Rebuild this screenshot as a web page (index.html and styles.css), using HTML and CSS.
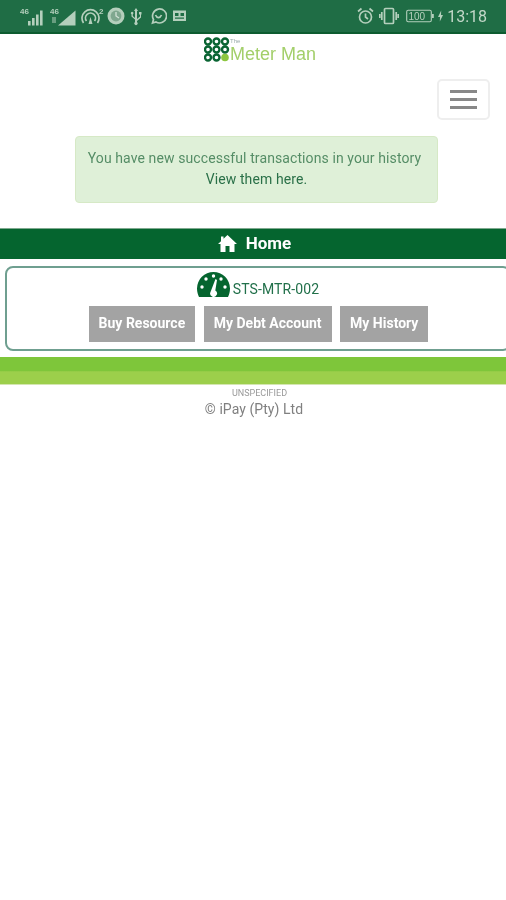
FILE: index.html
```html
<!DOCTYPE html>
<html lang="en">
<head>
<meta charset="utf-8">
<title>The Meter Man</title>
<link rel="stylesheet" href="styles.css">
</head>
<body>
<div class="page">
  <div class="status">
    <div class="status-left">
      <svg class="ic" width="26" height="20" viewBox="0 0 26 20"><text x="0" y="8" class="tiny">46</text><rect x="8" y="15" width="2.6" height="4.500"/><rect x="12" y="12" width="2.6" height="7.500"/><rect x="16" y="8.500" width="2.6" height="11"/><rect x="20" y="4.500" width="2.6" height="15"/></svg>
      <svg class="ic ml-4" width="26" height="20" viewBox="0 0 26 20"><text x="0" y="8" class="tiny">46</text><path d="M8 19.500 L25.500 4.500 V19.500 Z"/><rect x="2" y="11" width="4" height="6" opacity=".5"/></svg>
      <svg class="ic ml-5" width="24" height="20" viewBox="0 0 24 20"><g class="line" stroke-width="1.700"><path d="M2.500 17 A8.500 8.500 0 1 1 16.500 17"/><path d="M5.500 15 A5 5 0 1 1 13.500 15"/></g><path d="M7.500 18 L9.500 11 L11.500 18 Z"/><text x="18" y="8" class="tiny">2</text></svg>
      <svg class="ic ml-2" width="18" height="20" viewBox="0 0 18 20"><circle cx="9" cy="10" r="8.500"/><circle cx="9" cy="10" r="5.400" fill="#7fa78f"/><path d="M9 6 V10 L12 12" fill="none" stroke="#d3e2d7" stroke-width="1.300"/></svg>
      <svg class="ic ml-5" width="12" height="20" viewBox="0 0 12 20"><path d="M6 2 L8 5 H7 V13 L10 10.500 V8.500 H9 V6 H11.500 V8.500 H11 V11.500 L7 15 V16 A1.700 1.700 0 1 1 5 16 V13.500 L1.500 10.500 V8.300 A1.300 1.300 0 1 1 2.800 8.300 V10 L5 12 V5 H4 Z"/></svg>
      <svg class="ic ml-8" width="17" height="20" viewBox="0 0 17 20"><g class="line" stroke-width="1.700"><path d="M2.500 17 L3.500 13.500 A7 7 0 1 1 6 16 Z"/><path d="M5.500 9 C7 12.500 10 12.500 11.500 9"/></g></svg>
      <svg class="ic ml-5" width="15" height="20" viewBox="0 0 15 20"><path fill-rule="evenodd" d="M1 4.500 H14 V15 H1 Z M3 7 V10 H6.500 V7 Z M8.500 7 V10 H12 V7 Z M3 11.500 V12.800 H12 V11.500 Z"/></svg>
    </div>
    <div class="status-right">
      <svg class="ic" width="17" height="20" viewBox="0 0 17 20"><g class="line" stroke-width="1.700"><circle cx="8.500" cy="11" r="6"/><path d="M8.500 7.500 V11 L11 13"/><path d="M1 5.500 L4.500 2.500 M16 5.500 L12.500 2.500"/></g></svg>
      <svg class="ic ml-2" width="20" height="20" viewBox="0 0 20 20"><g class="line" stroke-width="1.700"><rect x="5.500" y="2.500" width="9" height="15" rx="1"/><path d="M2.800 6 V14 M17.200 6 V14 M.800 8 V12 M19.200 8 V12"/></g></svg>
      <svg class="ic ml-4" width="28" height="20" viewBox="0 0 28 20"><rect class="line" x=".7" y="4.200" width="24.600" height="11.600" rx="1.500" stroke-width="1.100"/><rect x="26" y="8" width="1.800" height="4"/><text x="2.500" y="13.800" class="batt">100</text></svg>
      <svg class="ic" width="7" height="20" viewBox="0 0 7 20"><path d="M4.200 4.500 L1 11 H3 L2.800 15.500 L6 9 H4 Z"/></svg>
      <span class="clock">13:18</span>
    </div>
  </div>

  <div class="logo">
    <svg class="logo-mark" width="26" height="25" viewBox="0 0 26 25">
      <g class="rings">
        <circle cx="4" cy="4.500" r="3"/><circle cx="12.500" cy="4.500" r="3"/><circle cx="21" cy="4.500" r="3"/>
        <circle cx="4" cy="12.500" r="3"/><circle cx="12.500" cy="12.500" r="3"/><circle cx="21" cy="12.500" r="3"/>
        <circle cx="4" cy="20.500" r="3"/><circle cx="12.500" cy="20.500" r="3"/>
      </g>
      <circle class="lime" cx="21" cy="20.500" r="3.800"/>
    </svg>
    <div class="logo-text">
      <span class="logo-the">The</span>
      <span class="logo-name">Meter Man</span>
    </div>
  </div>

  <div class="toolbar">
    <button class="toggle" type="button" aria-label="Menu"><span></span><span></span><span></span></button>
  </div>

  <div class="alert">
    <div class="alert-msg">You have new successful transactions in your history</div>
    <a class="alert-link" href="#">View them here.</a>
  </div>

  <div class="home-bar">
    <svg width="19" height="17" viewBox="0 0 19 17"><path fill="#fff" d="M9.500 0 L19 9 H16.500 V17 H11.500 V11 H7.500 V17 H2.500 V9 H0 L3 6.200 V1.500 H5.500 V3.800 Z"/></svg>
    <span>Home</span>
  </div>

  <div class="card">
    <div class="meter">
      <svg width="33" height="25" viewBox="0 0 33 25">
        <path fill="#05652f" d="M16.500 0 A16.500 16.500 0 0 1 33 16.500 C33 20 32 23 31 25 H2 C1 23 0 20 0 16.500 A16.500 16.500 0 0 1 16.500 0 Z"/>
        <g fill="#fff"><circle cx="5" cy="15" r="1.700"/><circle cx="9" cy="7" r="1.700"/><circle cx="16.500" cy="4" r="1.700"/><circle cx="24" cy="7" r="1.700"/><circle cx="28" cy="15" r="1.700"/>
        <path d="M18.500 7 L20 8 L18.300 18.500 A3.400 3.400 0 1 1 13.500 20 Z"/></g>
      </svg>
      <span class="meter-id">STS-MTR-002</span>
    </div>
    <div class="actions">
      <a class="btn" href="#">Buy Resource</a>
      <a class="btn" href="#">My Debt Account</a>
      <a class="btn" href="#">My History</a>
    </div>
  </div>

  <div class="band"></div>

  <footer class="footer">
    <div class="build">UNSPECIFIED</div>
    <div class="copy">© iPay (Pty) Ltd</div>
  </footer>
</div>
</body>
</html>
```
FILE: styles.css
```css
html, body {
  margin: 0;
  padding: 0;
  background: #fff;
  overflow: hidden;
  height: 900px;
}
.page {
  width: 506px;
  font-family: Roboto, "Liberation Sans", sans-serif;
  filter: blur(0.6px);
}
.status {
  height: 32px;
  background: #1f6d45;
  border-bottom: 2px solid #0d5c30;
  display: flex;
  justify-content: space-between;
  align-items: center;
  padding: 0 19px 0 20px;
}
.status-left, .status-right {
  display: flex;
  align-items: center;
}
.status-right { gap: 3px; }
.ic { fill: #b4cfbc; display: block; }
.ml-2 { margin-left: 2px; }
.ml-4 { margin-left: 4px; }
.ml-5 { margin-left: 5px; }
.ml-8 { margin-left: 8px; }
.line { fill: none; stroke: #b4cfbc; }
.tiny { font: 700 8px "Liberation Sans", sans-serif; }
.batt { font: 400 10px "Liberation Sans", sans-serif; }
.clock {
  color: #c3d8c9;
  font-size: 16px;
}
.logo {
  height: 28px;
  padding: 3px 0 0 14px;
  display: flex;
  justify-content: center;
  align-items: flex-start;
}
.logo-mark .rings circle { fill: none; stroke: #0a6433; stroke-width: 2.400; }
.logo-mark .lime { fill: #8cc63f; }
.logo-text {
  display: flex;
  flex-direction: column;
  font-family: "Liberation Sans", sans-serif;
}
.logo-the { font-size: 6px; line-height: 7px; color: #9aa; margin-top: 1px; }
.logo-name {
  font-size: 18px;
  line-height: 18px;
  color: #a3cf6a;
}
.toolbar {
  height: 41px;
  margin-top: 14px;
  display: flex;
  justify-content: flex-end;
  padding-right: 16px;
}
.toggle {
  width: 53px;
  height: 41px;
  padding: 0;
  background: #fff;
  border: 2px solid #eee;
  border-radius: 5px;
  display: flex;
  flex-direction: column;
  justify-content: center;
  align-items: center;
  gap: 5px;
}
.toggle span {
  width: 27px;
  height: 3px;
  background: #888;
}
.alert {
  margin: 16px 68px 0 75px;
  height: 67px;
  box-sizing: border-box;
  background: #dff0d8;
  border: 1px solid #d6e9c6;
  border-radius: 4px;
  text-align: center;
  color: #558d66;
  font-size: 14px;
  letter-spacing: 0.1px;
  line-height: 21px;
  padding-top: 11px;
}
.alert-msg { padding-right: 4px; }
.alert-link {
  color: #2a7048;
  text-decoration: none;
}
.home-bar {
  margin-top: 25px;
  height: 31px;
  box-sizing: border-box;
  border-top: 1px solid #7fa98f;
  background: #05652f;
  color: #fff;
  font-weight: 700;
  font-size: 17px;
  display: flex;
  justify-content: center;
  align-items: center;
  gap: 9px;
  padding-bottom: 2px;
  padding-left: 3px;
}
.card {
  margin: 7px 0 0 5px;
  width: 506px;
  height: 85px;
  box-sizing: border-box;
  border: 2px solid #6f9f90;
  border-radius: 8px;
  padding-top: 4px;
  display: flex;
  flex-direction: column;
  align-items: center;
}
.meter {
  display: flex;
  align-items: flex-end;
  gap: 3px;
  height: 25px;
  color: #21704a;
  font-size: 14px;
  line-height: 17px;
}
.meter-id { letter-spacing: 0.1px; margin-bottom: -1px; }
.actions {
  display: flex;
  gap: 8.5px;
  margin-top: 9px;
  padding-left: 1px;
}
.btn {
  height: 36px;
  line-height: 35px;
  padding: 0 10px;
  background: #a3a3a3;
  color: #fff;
  font-weight: 700;
  font-size: 14px;
  text-decoration: none;
}
.band {
  margin-top: 6px;
  height: 28px;
  background: linear-gradient(#7ec63a 0, #7ec63a 50%, #9ccf4b 55%, #9ccf4b 100%);
  border-bottom: 1px solid #d4e6b0;
  box-sizing: border-box;
}
.footer {
  text-align: center;
}
.build {
  font-size: 9px;
  line-height: 10px;
  margin-top: 3px;
  color: #999;
  padding-left: 13px;
}
.copy {
  font-size: 14px;
  letter-spacing: 0.05px;
  line-height: 20px;
  margin-top: 1px;
  padding-left: 2px;
  color: #808080;
}
```
